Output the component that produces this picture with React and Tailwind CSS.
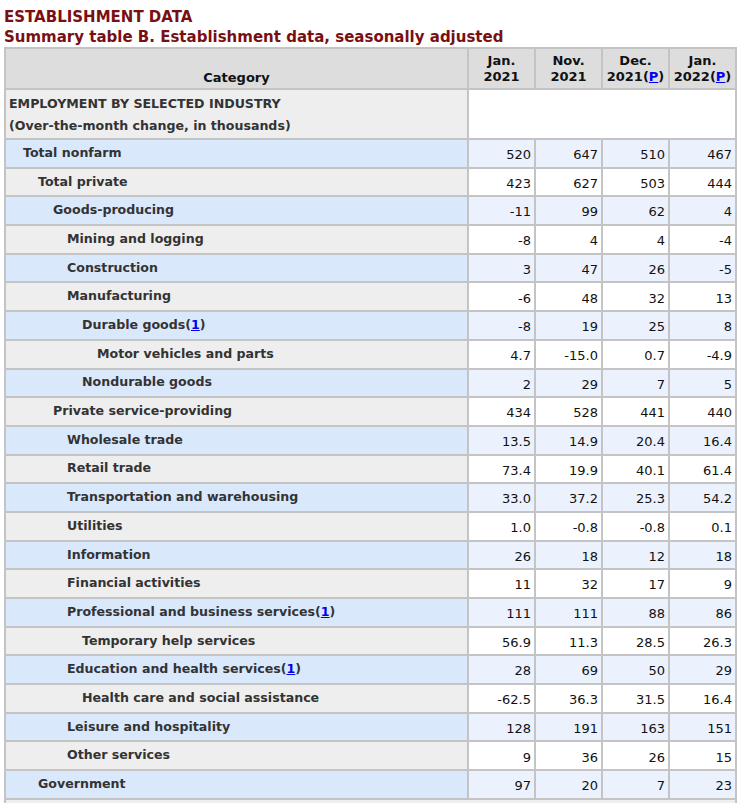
const rows = [
  { name: "Total nonfarm", level: 1, values: ["520", "647", "510", "467"] },
  { name: "Total private", level: 2, values: ["423", "627", "503", "444"] },
  { name: "Goods-producing", level: 3, values: ["-11", "99", "62", "4"] },
  { name: "Mining and logging", level: 4, values: ["-8", "4", "4", "-4"] },
  { name: "Construction", level: 4, values: ["3", "47", "26", "-5"] },
  { name: "Manufacturing", level: 4, values: ["-6", "48", "32", "13"] },
  { name: "Durable goods", note: true, level: 5, values: ["-8", "19", "25", "8"] },
  { name: "Motor vehicles and parts", level: 6, values: ["4.7", "-15.0", "0.7", "-4.9"] },
  { name: "Nondurable goods", level: 5, values: ["2", "29", "7", "5"] },
  { name: "Private service-providing", level: 3, values: ["434", "528", "441", "440"] },
  { name: "Wholesale trade", level: 4, values: ["13.5", "14.9", "20.4", "16.4"] },
  { name: "Retail trade", level: 4, values: ["73.4", "19.9", "40.1", "61.4"] },
  { name: "Transportation and warehousing", level: 4, values: ["33.0", "37.2", "25.3", "54.2"] },
  { name: "Utilities", level: 4, values: ["1.0", "-0.8", "-0.8", "0.1"] },
  { name: "Information", level: 4, values: ["26", "18", "12", "18"] },
  { name: "Financial activities", level: 4, values: ["11", "32", "17", "9"] },
  { name: "Professional and business services", note: true, level: 4, values: ["111", "111", "88", "86"] },
  { name: "Temporary help services", level: 5, values: ["56.9", "11.3", "28.5", "26.3"] },
  { name: "Education and health services", note: true, level: 4, values: ["28", "69", "50", "29"] },
  { name: "Health care and social assistance", level: 5, values: ["-62.5", "36.3", "31.5", "16.4"] },
  { name: "Leisure and hospitality", level: 4, values: ["128", "191", "163", "151"] },
  { name: "Other services", level: 4, values: ["9", "36", "26", "15"] },
  { name: "Government", level: 2, values: ["97", "20", "7", "23"] },
];

const indent = {
  1: "pl-[17px]",
  2: "pl-[32px]",
  3: "pl-[47px]",
  4: "pl-[61px]",
  5: "pl-[76px]",
  6: "pl-[91px]",
};

const Note = ({ children }) => (
  <>
    (<a href="#" className="text-[#0000ee] underline">{children}</a>)
  </>
);

export default function App() {
  return (
    <div
      className="bg-white px-[4px] pt-[7px] text-[#333]"
      style={{ fontFamily: "'DejaVu Sans', Verdana, sans-serif" }}
    >
      <div className="text-[15px] font-bold leading-[20px] text-[#7a0f12]">
        <p>ESTABLISHMENT DATA</p>
        <p>Summary table B. Establishment data, seasonally adjusted</p>
      </div>

      <table className="w-[733px] border-collapse border-2 border-[#c4c4c4] text-[13px]">
        <thead>
          <tr className="h-[41px] bg-[#dddddd] text-[#111]">
            <th className="border-2 border-[#c4c4c4] align-bottom pb-[1px] font-bold">Category</th>
            <th className="w-[67px] border-2 border-[#c4c4c4] font-bold leading-[16px]">Jan.<br />2021</th>
            <th className="w-[67px] border-2 border-[#c4c4c4] font-bold leading-[16px]">Nov.<br />2021</th>
            <th className="w-[67px] border-2 border-[#c4c4c4] font-bold leading-[16px]">Dec.<br />2021<Note>P</Note></th>
            <th className="w-[67px] border-2 border-[#c4c4c4] font-bold leading-[16px]">Jan.<br />2022<Note>P</Note></th>
          </tr>
        </thead>
        <tbody>
          <tr className="h-[50px]">
            <td className="border-2 border-[#c4c4c4] bg-[#eeeeee] pl-[3px] pt-[1px] text-[12.6px] font-bold leading-[22px]">
              EMPLOYMENT BY SELECTED INDUSTRY
              <br />
              (Over-the-month change, in thousands)
            </td>
            <td colSpan={4} className="border-2 border-[#c4c4c4] bg-white"></td>
          </tr>
          {rows.map((row, i) => {
            const blue = i % 2 === 0;
            return (
              <tr key={row.name} className="h-[28.7px]">
                <td
                  className={`border-2 border-[#c4c4c4] text-[12.6px] font-bold ${indent[row.level]} ${
                    blue ? "bg-[#dae8fc]" : "bg-[#eeeeee]"
                  }`}
                >
                  {row.name}
                  {row.note && <Note>1</Note>}
                </td>
                {row.values.map((v, j) => (
                  <td
                    key={j}
                    className={`border-2 border-[#c4c4c4] pr-[3px] pt-[3px] text-right text-[#111] ${
                      blue ? "bg-[#ebf2fe]" : "bg-white"
                    }`}
                  >
                    {v}
                  </td>
                ))}
              </tr>
            );
          })}
          <tr className="h-[28.7px]">
            <td colSpan={5} className="border-2 border-[#c4c4c4] bg-[#eeeeee]"></td>
          </tr>
        </tbody>
      </table>
    </div>
  );
}
